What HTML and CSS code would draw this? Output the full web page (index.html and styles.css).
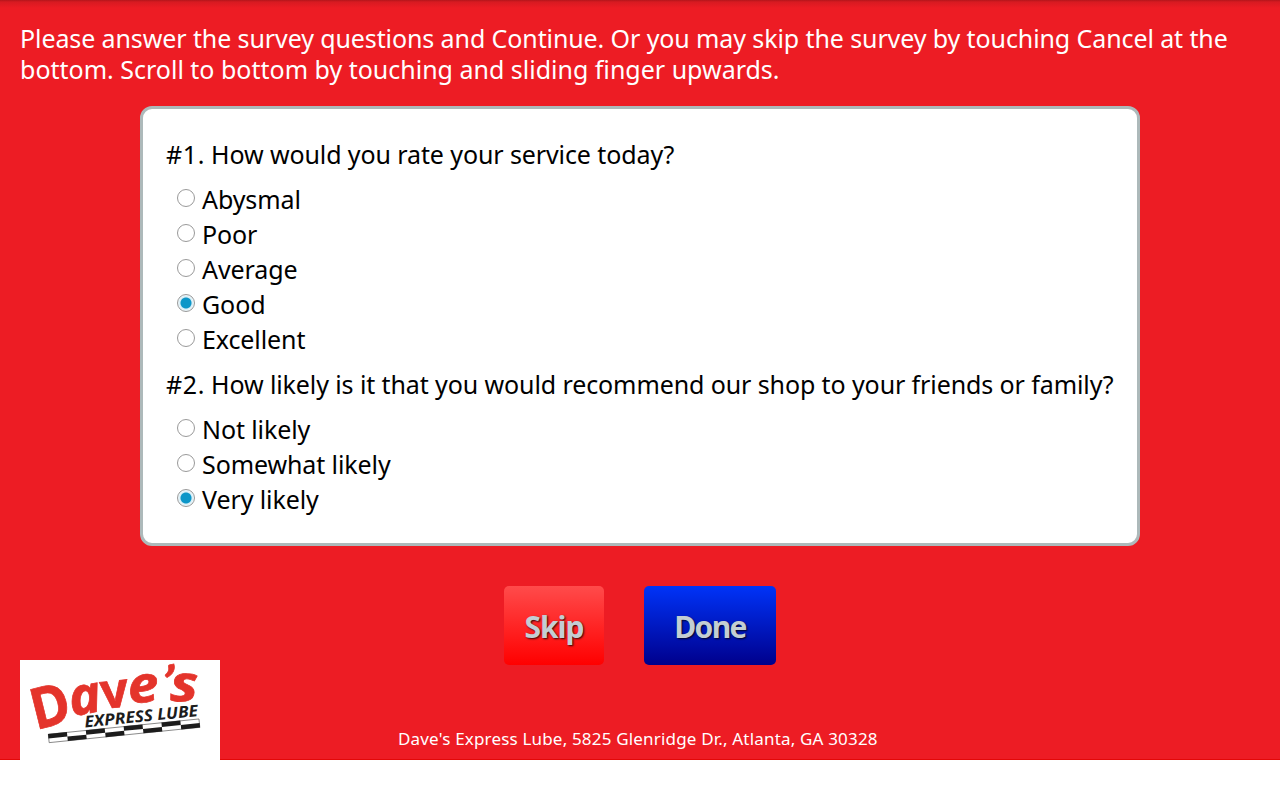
FILE: index.html
```
<!DOCTYPE html>
<html lang="en">
  <head>
    <meta charset="UTF-8" />
    <meta name="viewport" content="width=device-width, initial-scale=1.0" />
    <title>Customer Survey</title>
    <link rel="stylesheet" href="styles.css">
  </head>
  <body>
    <div class="page">
      <p class="intro">
        Please answer the survey questions and Continue. Or you may skip the survey by touching Cancel at the<br />
        <span class="intro-second">bottom. Scroll to bottom by touching and sliding finger upwards.</span>
      </p>

      <form class="survey">
        <div class="question"><span class="number">#1.</span>How would you rate your service today?</div>
        <div class="answers">
          <label><input type="radio" name="q1" />Abysmal</label>
          <label><input type="radio" name="q1" />Poor</label>
          <label><input type="radio" name="q1" />Average</label>
          <label><input type="radio" name="q1" checked />Good</label>
          <label><input type="radio" name="q1" />Excellent</label>
        </div>

        <div class="question"><span class="number">#2.</span>How likely is it that you would recommend our shop to your friends or family?</div>
        <div class="answers">
          <label><input type="radio" name="q2" />Not likely</label>
          <label><input type="radio" name="q2" />Somewhat likely</label>
          <label><input type="radio" name="q2" checked />Very likely</label>
        </div>
      </form>

      <div class="buttons">
        <button type="button" class="skip">Skip</button>
        <button type="button" class="done">Done</button>
      </div>

      <div class="footer">
        <svg class="logo" width="200" height="100" viewBox="0 0 200 100">
          <rect width="200" height="100" fill="#fff" />
          <g class="logo-name">
            <text class="upright" transform="translate(16 70) rotate(-14)" font-size="57" textLength="39" lengthAdjust="spacingAndGlyphs">D</text>
            <text transform="translate(52 56.5) rotate(-11)" font-size="52" textLength="32" lengthAdjust="spacingAndGlyphs">a</text>
            <text class="upright" transform="translate(82 49) rotate(-6)" font-size="49" textLength="28" lengthAdjust="spacingAndGlyphs">v</text>
            <text transform="translate(109 43.5) rotate(-5)" font-size="50" textLength="31" lengthAdjust="spacingAndGlyphs">e</text>
            <text class="apostrophe" transform="translate(139 39) rotate(8)" font-size="48">’</text>
            <text transform="translate(150 41) rotate(1)" font-size="50" textLength="28" lengthAdjust="spacingAndGlyphs">s</text>
          </g>
          <text class="logo-sub" transform="translate(65 67.5) rotate(-5.8)" textLength="114" lengthAdjust="spacingAndGlyphs">EXPRESS LUBE</text>
          <g transform="translate(28 74) rotate(-5.8)">
            <rect x="0.3" y="0.3" width="151.4" height="8.4" fill="#fff" stroke="#444" stroke-width="0.6" />
            <path fill="#1c1c1c" d="M0 0h19v4.5H0zM19 4.5h19V9H19zM38 0h19v4.5H38zM57 4.5h19V9H57zM76 0h19v4.5H76zM95 4.5h19V9H95zM114 0h19v4.5H114zM133 4.5h19V9H133z" />
          </g>
        </svg>
        <p class="address">Dave's Express Lube, 5825 Glenridge Dr., Atlanta, GA 30328</p>
      </div>
    </div>
  </body>
</html>
```
FILE: styles.css
```
* {
  box-sizing: border-box;
}

body {
  margin: 0;
  background-color: #fff;
  font-family: "Noto Sans", sans-serif;
  font-size: 25px;
  letter-spacing: -0.1px;
  color: #000;
}

.page {
  display: flex;
  flex-direction: column;
  align-items: center;
  height: 760px;
  background: linear-gradient(#b3151b 0, #d81a21 2px, #ed1c24 8px);
  border-bottom: 1px solid #e30808;
}

.intro {
  flex-shrink: 0;
  align-self: flex-start;
  margin: 0;
  padding: 23px 0 0 20px;
  height: 106px;
  line-height: 31px;
  color: #fff;
  white-space: nowrap;
}

.intro-second {
  letter-spacing: 0;
}

.survey {
  flex-shrink: 0;
  width: 1000px;
  height: 440px;
  padding: 27px 23px;
  background-color: #fff;
  border: 3px solid #adb9ba;
  border-radius: 12px;
  white-space: nowrap;
}

.question {
  display: flex;
  height: 40px;
  line-height: 36px;
}

.number {
  flex: 0 0 45px;
  letter-spacing: 0.7px;
}

.answers {
  padding: 5px 0 10px 10px;
}

.answers label {
  display: flex;
  align-items: center;
  height: 35px;
}

.answers input {
  appearance: none;
  width: 18px;
  height: 18px;
  margin: 0 7.5px 1px 0.5px;
  border: 1px solid #999;
  border-radius: 50%;
  background-color: #fff;
}

.answers input:checked {
  background: radial-gradient(circle, #0c96c8 5px, #d5edf6 6px, #f0f8fb 8px);
}

.buttons {
  display: flex;
  flex-shrink: 0;
  gap: 40px;
  margin-top: 40px;
}

button {
  height: 79px;
  padding: 2px 0 0;
  border: none;
  border-radius: 5px;
  font-family: "Noto Sans", sans-serif;
  font-size: 30px;
  font-weight: 700;
  letter-spacing: -1px;
  color: #c3ced3;
  text-shadow: 1px 1px 2px rgba(0, 0, 0, 0.8);
  cursor: pointer;
}

.skip {
  width: 100px;
  background: linear-gradient(#ff4b4b, #ff0000);
}

.done {
  width: 132px;
  letter-spacing: -1.7px;
  background: linear-gradient(#0033f8, #00008c);
}

.footer {
  display: flex;
  flex-shrink: 0;
  align-items: flex-end;
  align-self: stretch;
  height: 100px;
  margin-top: -5px;
  padding-left: 20px;
}

.logo {
  display: block;
  overflow: visible;
  letter-spacing: 0;
}

.logo-name {
  fill: #e4342b;
  stroke: #e4342b;
  stroke-width: 0.7;
  font-weight: 700;
  font-style: italic;
}

.logo-name .upright {
  font-style: normal;
}

.logo-name .apostrophe {
  font-family: Lato, sans-serif;
  font-weight: 900;
}

.logo-sub {
  fill: #1c1c1c;
  font-size: 16px;
  font-weight: 700;
  font-style: italic;
}

.address {
  margin: 0 0 9px 178px;
  font-size: 17px;
  letter-spacing: 0.18px;
  line-height: 24px;
  color: #fff;
}
```
